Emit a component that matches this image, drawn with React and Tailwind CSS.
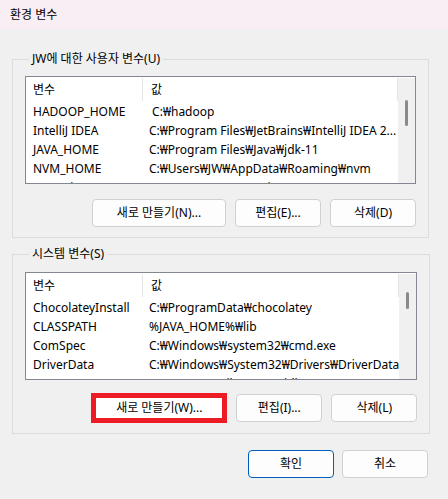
import React from 'react';

const userVars = [
    { name: 'HADOOP_HOME', value: '\u00a0C:₩hadoop' },
    { name: 'IntelliJ IDEA', value: 'C:₩Program Files₩JetBrains₩IntelliJ IDEA 2...' },
    { name: 'JAVA_HOME', value: 'C:₩Program Files₩Java₩jdk-11' },
    { name: 'NVM_HOME', value: 'C:₩Users₩JW₩AppData₩Roaming₩nvm' },
    { name: 'OneDrive', value: 'C:₩Users₩JW₩OneDrive' },
];

const systemVars = [
    { name: 'ChocolateyInstall', value: 'C:₩ProgramData₩chocolatey' },
    { name: 'CLASSPATH', value: '%JAVA_HOME%₩lib' },
    { name: 'ComSpec', value: 'C:₩Windows₩system32₩cmd.exe' },
    { name: 'DriverData', value: 'C:₩Windows₩System32₩Drivers₩DriverData' },
    { name: 'JAVA_HOME', value: 'C:₩Program Files₩Java₩jdk-11' },
];

const VarList = ({ rows, thumbTop, thumbHeight }) => (
    <div className="flex h-[108px] border border-[#828790] bg-white overflow-hidden">
        <div className="flex-1 min-w-0">
            <div className="flex h-[25px] items-center">
                <div className="w-[116px] pl-[7px]">변수</div>
                <div className="h-[23px] self-start mt-[1px] border-l border-[#e5e5e5]" />
                <div className="flex-1 pl-[8px]">값</div>
                <div className="h-[23px] self-start mt-[1px] border-l border-[#e5e5e5]" />
            </div>
            {rows.map((row) => (
                <div key={row.name} className="flex h-[19px] items-center">
                    <div className="w-[116px] pl-[7px] shrink-0 whitespace-nowrap">{row.name}</div>
                    <div className="pl-[7px] truncate">{row.value}</div>
                </div>
            ))}
        </div>
        <div className="w-[17px] mt-[1px] bg-[#f0f0f0] flex justify-center">
            <div
                className="w-[3px] bg-[#8a8a8a] rounded-full"
                style={{ marginTop: thumbTop, height: thumbHeight }}
            />
        </div>
    </div>
);

const Button = ({ children, className = 'border-[#d0d0d0]' }) => (
    <button
        type="button"
        className={`w-[86px] h-[28px] rounded-[4px] border bg-[#fdfdfd] text-[12px] text-black flex items-center justify-center ${className}`}
    >
        {children}
    </button>
);

const Group = ({ title, children }) => (
    <fieldset className="border border-[#dcdcdc] px-3 pb-[10px]">
        <legend className="ml-[4px] px-[3px] leading-[16px]">{title}</legend>
        {children}
    </fieldset>
);

export default function App() {
    return (
        <div
            className="w-[448px] h-[499px] bg-[#f0f0f0] text-[12px] text-black leading-[16px] flex flex-col"
            style={{ fontFamily: '"Noto Sans", "Noto Sans CJK KR", sans-serif' }}
        >
            <div className="h-[29px] bg-[#f9eef3] flex items-center pl-[10px] shrink-0">
                환경 변수
            </div>

            <div className="pl-3 pr-[19px] pt-[22px] flex flex-col">
                <Group title="JW에 대한 사용자 변수(U)">
                    <div className="mt-[9px]">
                        <VarList rows={userVars} thumbTop={22} thumbHeight={26} />
                    </div>
                    <div className="flex justify-end items-center gap-[9px] mt-[15px]">
                        <button
                            type="button"
                            className="w-[134px] h-[28px] rounded-[4px] border border-[#d0d0d0] bg-[#fdfdfd] flex items-center justify-center"
                        >
                            새로 만들기(N)...
                        </button>
                        <Button>편집(E)...</Button>
                        <Button>삭제(D)</Button>
                    </div>
                </Group>

                <div className="mt-[8px]">
                    <Group title="시스템 변수(S)">
                        <div className="mt-[10px]">
                            <VarList rows={systemVars} thumbTop={18} thumbHeight={17} />
                        </div>
                        <div className="flex justify-end items-center gap-[9px] mt-[13px]">
                            <button
                                type="button"
                                className="w-[136px] h-[30px] border-[5px] border-[#ed1c24] bg-white flex items-center justify-center"
                            >
                                새로 만들기(W)...
                            </button>
                            <Button>편집(I)...</Button>
                            <Button>삭제(L)</Button>
                        </div>
                    </Group>
                </div>

                <div className="flex justify-end gap-[8px] mt-[16px] mr-[1px]">
                    <Button className="border-[#005fb8]">확인</Button>
                    <Button>취소</Button>
                </div>
            </div>
        </div>
    );
}
